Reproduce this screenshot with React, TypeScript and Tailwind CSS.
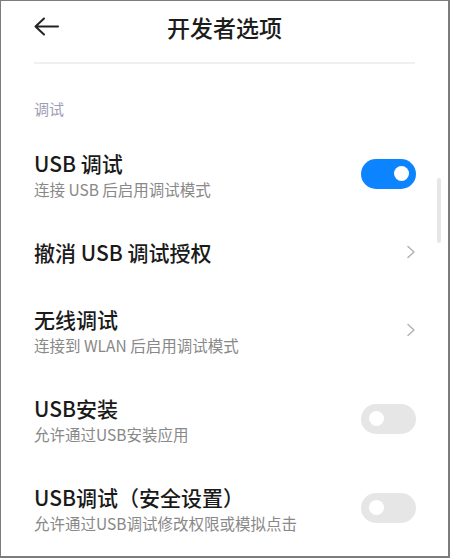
import React from "react";

const font = { fontFamily: '"Noto Sans CJK SC", "Noto Sans", sans-serif' };

function Toggle({ on }: { on: boolean }) {
  return (
    <div
      className={`flex h-[30px] w-[55px] shrink-0 items-center rounded-full px-[7.5px] ${
        on ? "justify-end bg-[#0d84ff]" : "justify-start bg-[#e6e6e6]"
      }`}
    >
      <div className="h-[15px] w-[15px] rounded-full bg-white" />
    </div>
  );
}

function Chevron() {
  return (
    <svg width="10" height="14" viewBox="0 0 10 14" className="shrink-0">
      <path d="M2 1.5 L8 7 L2 12.5" fill="none" stroke="#b3b3b3" strokeWidth="1.5" strokeLinecap="round" strokeLinejoin="round" />
    </svg>
  );
}

type Row = {
  title: string;
  sub?: string;
  right: "on" | "off" | "chevron";
};

const rows: Row[] = [
  { title: "USB 调试", sub: "连接 USB 后启用调试模式", right: "on" },
  { title: "撤消 USB 调试授权", right: "chevron" },
  { title: "无线调试", sub: "连接到 WLAN 后启用调试模式", right: "chevron" },
  { title: "USB安装", sub: "允许通过USB安装应用", right: "off" },
  { title: "USB调试（安全设置）", sub: "允许通过USB调试修改权限或模拟点击", right: "off" },
];

export default function App() {
  return (
    <div
      className="relative box-border h-[558px] w-[450px] overflow-hidden border-b-2 border-l border-r-2 border-t border-[#7c7c7c] bg-white"
      style={font}
    >
      {/* top bar */}
      <div className="flex h-[51px] items-center px-[33px]">
        <svg width="25" height="19" viewBox="0 0 25 19" className="shrink-0">
          <path d="M1.5 9.5 H24 M10 1.5 L1.5 9.5 L10 17.5" fill="none" stroke="#222" strokeWidth="2" strokeLinecap="round" strokeLinejoin="round" />
        </svg>
        <div className="flex-1 text-center text-[23px] font-medium leading-[30px] text-[#1c1c1c]">开发者选项</div>
        <div className="w-[25px] shrink-0" />
      </div>

      <div className="mx-[33px] mt-[10px] h-[2px] bg-[#f0f0f0]" />

      <div className="px-[33px] pt-[35px] text-[15px] leading-[20px] text-[#9e9cb4]">调试</div>

      <div className="mt-[10px]">
        {rows.map((r) => (
          <div
            key={r.title}
            className={`flex items-center justify-between pl-[33px] pr-[32px] ${r.sub ? "h-[89px]" : "h-[67px]"}`}
          >
            <div className="flex flex-col">
              <div className="text-[21px] font-medium leading-[28px] text-[#1a1a1a]">{r.title}</div>
              {r.sub && <div className="mt-[2px] text-[15.5px] leading-[20px] text-[#888888]">{r.sub}</div>}
            </div>
            {r.right === "chevron" ? <Chevron /> : <Toggle on={r.right === "on"} />}
          </div>
        ))}
      </div>

      {/* scrollbar */}
      <div className="absolute left-[436px] top-[177px] h-[65px] w-[4px] rounded-full bg-[#e6e6e6]" />
    </div>
  );
}
